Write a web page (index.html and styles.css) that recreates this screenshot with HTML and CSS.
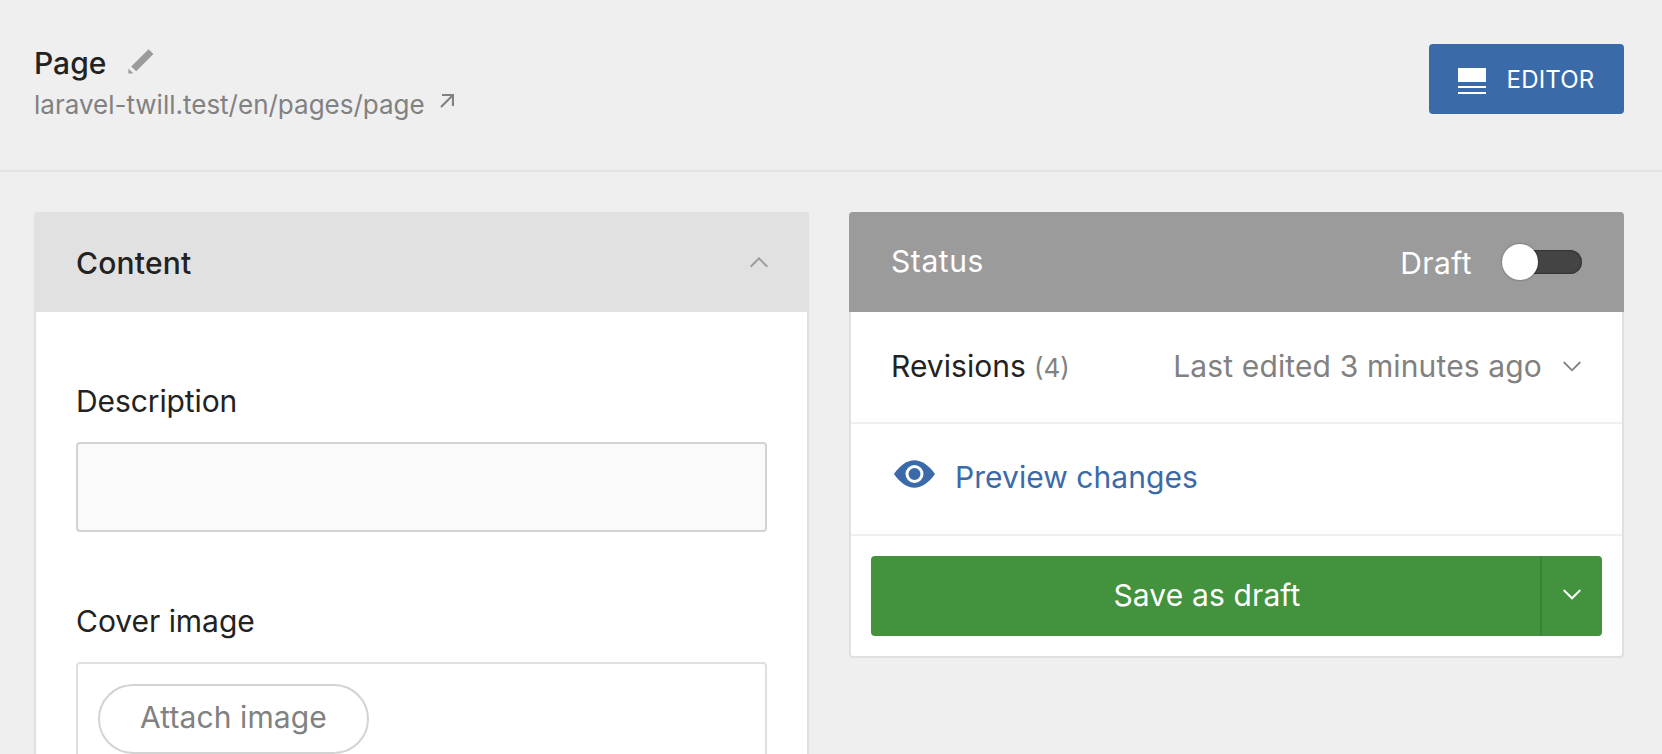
FILE: index.html
```html
<!DOCTYPE html>
<html lang="en">
<head>
<meta charset="utf-8">
<title>Page</title>
<link rel="stylesheet" href="styles.css">
</head>
<body>
<header class="topbar">
  <div class="heading">
    <h1 class="heading-title"><span class="t-page">Page</span>
      <svg class="pencil" width="26" height="26" viewBox="0 0 26 26"><path d="M20.6 0.2 25.4 5 8.2 22.2 3.2 17.4ZM0.4 19.6 5.4 24.6H0.4Z" fill="#9b9b9b"/></svg>
    </h1>
    <a class="permalink"><span class="t-url">laravel-twill.test/en/pages/page</span>
      <svg class="ext" width="14" height="14" viewBox="0 0 14 14"><path d="M2 1H13V12M13 1 1 13" fill="none" stroke="#818181" stroke-width="2.2"/></svg>
    </a>
  </div>
  <button class="editor-btn">
    <svg width="28" height="26" viewBox="0 0 28 26"><path d="M0 0H28V14H0ZM0 18H28V20H0ZM0 24H28V26H0Z" fill="#fff"/></svg>
    <span class="t-editor">EDITOR</span>
  </button>
</header>
<main class="columns">
  <section class="panel panel-content">
    <div class="panel-head"><h2 class="t-content">Content</h2>
      <svg width="18" height="11" viewBox="0 0 18 11"><path d="M.7 9.7 9 1.4 17.3 9.7" fill="none" stroke="#9b9b9b" stroke-width="2"/></svg>
    </div>
    <div class="fields">
      <label class="label t-desc">Description</label>
      <div class="input"></div>
      <label class="label label-cover t-cover">Cover image</label>
      <div class="media"><button class="pill"><span class="t-attach">Attach image</span></button></div>
    </div>
  </section>
  <section class="panel panel-publish">
    <div class="publish-head"><span class="t-status">Status</span>
      <div class="switch"><span class="t-draft">Draft</span><span class="track"><span class="knob"></span></span></div>
    </div>
    <div class="row revisions">
      <span class="rev"><span class="t-rev">Revisions</span><span class="count">(4)</span></span>
      <span class="edited"><span class="t-edited">Last edited 3 minutes ago</span>
        <svg width="18" height="11" viewBox="0 0 18 11"><path d="M.7 1 9 9.3 17.3 1" fill="none" stroke="#818181" stroke-width="1.8"/></svg>
      </span>
    </div>
    <div class="row preview">
      <svg width="42" height="28" viewBox="0 0 42 28"><path d="M.9 14C7.5 5 14 .3 21.3 .3S35.500 5 42 14C35.500 23 28.600 27.700 21.300 27.700S7.500 23 .9 14Z" fill="#3b6aa9"/><circle cx="21.500" cy="14" r="7.500" fill="#3b6aa9" stroke="#fff" stroke-width="3"/></svg>
      <a class="t-preview">Preview changes</a>
    </div>
    <div class="save">
      <button class="save-main"><span class="t-save">Save as draft</span></button>
      <button class="save-more"><svg width="18" height="11" viewBox="0 0 18 11"><path d="M.7 1 9 9.3 17.3 1" fill="none" stroke="#fff" stroke-width="2"/></svg></button>
    </div>
  </section>
</main>
</body>
</html>
```

FILE: styles.css
```css
* { box-sizing: border-box; }
body {
  margin: 0;
  background: #efefef;
  color: #222;
  font: 400 30px/36px Inter, sans-serif;
  -webkit-font-smoothing: antialiased;
}
h1, h2 { margin: 0; font-size: 30px; line-height: 36px; font-weight: 500; }
button { margin: 0; padding: 0; border: 0; background: none; font: inherit; color: inherit; }
svg { display: block; flex: none; }
span, a, label { white-space: nowrap; }

.topbar {
  display: flex;
  justify-content: space-between;
  align-items: flex-start;
  height: 172px;
  padding: 44px 38px 0 34px;
  border-bottom: 2px solid #e3e3e3;
}
.heading-title { display: flex; align-items: center; gap: 22px; height: 38px; }
.pencil { margin-top: -2px; }
.permalink { display: flex; gap: 15px; height: 44px; color: #818181; font-size: 26px; line-height: 32px; padding-top: 7px; }
.ext { margin-top: 5px; }
.editor-btn {
  display: flex;
  align-items: center;
  gap: 20.5px;
  width: 195px;
  height: 70px;
  padding-left: 29px;
  border-radius: 4px;
  background: #3b6aa9;
  color: #fff;
  font-size: 24px;
  letter-spacing: .2px;
}
.editor-btn svg { margin-top: 3px; }
.t-editor { margin-top: 2px; }

.columns { display: grid; grid-template-columns: 775px 775px; gap: 40px; align-items: start; padding: 40px 38px 0 34px; }
.panel { border: 2px solid #e0e0e0; border-top: 0; border-radius: 4px; background: #fff; }
.panel-content { height: 542px; border-bottom: 0; border-radius: 4px 4px 0 0; }
.panel-head {
  display: flex;
  align-items: center;
  justify-content: space-between;
  height: 100px;
  margin: 0 -2px;
  padding: 2px 41px 0 42px;
  border-radius: 4px 4px 0 0;
  background: #e1e1e1;
}
.t-content { letter-spacing: .2px; }
.panel-head svg { margin-top: -2px; }
.fields { display: flex; flex-direction: column; padding: 71px 40px 0; }
.label { height: 59px; line-height: 36px; letter-spacing: -.1px; }
.t-cover { letter-spacing: -.03px; }
.input { height: 90px; border: 2px solid #d3d3d3; border-radius: 4px; background: #fafafa; }
.label-cover { margin-top: 71px; }
.media { height: 92px; padding: 20px 20px 0; border: 2px solid #e0e0e0; border-bottom: 0; border-radius: 4px 4px 0 0; }
.pill { display: block; width: 271px; height: 70px; padding-bottom: 5px; border: 2px solid #d3d3d3; border-radius: 35px; color: #818181; letter-spacing: .1px; }

.publish-head {
  display: flex;
  align-items: center;
  justify-content: space-between;
  height: 100px;
  margin: 0 -2px;
  padding: 0 42px;
  border-radius: 4px 4px 0 0;
  background: #9b9b9b;
  color: #fff;
}
.t-status { margin-top: -2px; letter-spacing: .6px; }
.switch { display: flex; align-items: center; gap: 32px; }
.t-draft { margin-top: 2px; letter-spacing: .4px; }
.track { display: flex; align-items: center; width: 78px; height: 24px; border-radius: 12px; background: #444; box-shadow: inset 0 0 2px #111; }
.knob { width: 36px; height: 36px; margin-left: -2px; border-radius: 50%; background: #fff; box-shadow: 0 0 2px rgba(0, 0, 0, .5); }
.row { display: flex; align-items: center; height: 112px; padding: 0 40px; border-bottom: 2px solid #efefef; }
.revisions { justify-content: space-between; padding-right: 41px; }
.rev { display: flex; align-items: baseline; gap: 8px; }
.t-rev { letter-spacing: .05px; }
.count { color: #818181; font-size: 26px; }
.edited { display: flex; align-items: center; gap: 21px; margin-top: -2px; color: #818181; }
.t-edited { letter-spacing: .14px; }
.preview { gap: 20px; padding: 0 40px 4px 42px; color: #3b6aa9; letter-spacing: .05px; }
.preview svg { margin-top: -6px; }
.save { display: flex; height: 120px; padding: 20px; color: #fff; }
.save-main { flex: 1; padding: 0 0 2px 3px; border-radius: 4px 0 0 4px; background: #43923e; letter-spacing: .13px; }
.save-more { display: grid; place-items: center; width: 62px; padding-bottom: 3px; border-left: 2px solid #3b8139; border-radius: 0 4px 4px 0; background: #43923e; }
```
